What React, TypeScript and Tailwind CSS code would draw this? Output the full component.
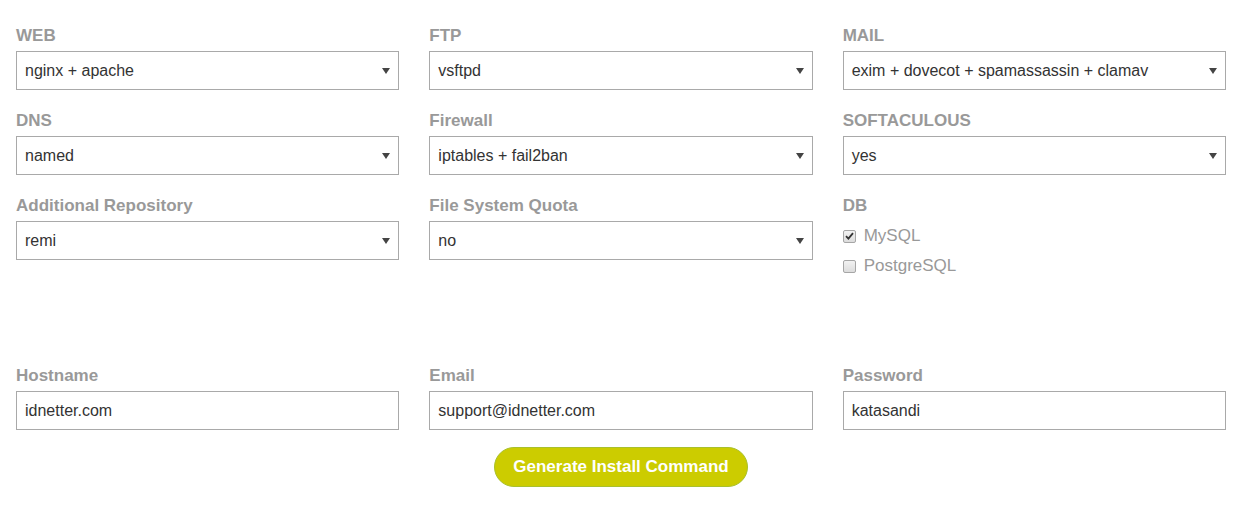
import React from "react";

type SelectField = {
  label: string;
  value: string;
};

const selectRows: SelectField[][] = [
  [
    { label: "WEB", value: "nginx + apache" },
    { label: "FTP", value: "vsftpd" },
    { label: "MAIL", value: "exim + dovecot + spamassassin + clamav" },
  ],
  [
    { label: "DNS", value: "named" },
    { label: "Firewall", value: "iptables + fail2ban" },
    { label: "SOFTACULOUS", value: "yes" },
  ],
];

const textFields = [
  { label: "Hostname", value: "idnetter.com" },
  { label: "Email", value: "support@idnetter.com" },
  { label: "Password", value: "katasandi" },
];

function Label({ children }: { children: React.ReactNode }) {
  return (
    <div className="mb-[5px] h-5 text-[17px] font-bold leading-5 text-[#999]">
      {children}
    </div>
  );
}

function Select({ label, value }: SelectField) {
  return (
    <div>
      <Label>{label}</Label>
      <div className="flex h-[39px] items-center justify-between border border-[#a9a9a9] bg-white pl-2 pr-[8px] text-[16px] text-[#333]">
        <span>{value}</span>
        <svg width="8" height="6" viewBox="0 0 8 6">
          <path d="M0 0 H8 L4 6 Z" fill="#444" />
        </svg>
      </div>
    </div>
  );
}

function TextInput({ label, value }: { label: string; value: string }) {
  return (
    <div>
      <Label>{label}</Label>
      <div className="flex h-[39px] items-center border border-[#a9a9a9] bg-white px-2 text-[16px] text-[#333]">
        {value}
      </div>
    </div>
  );
}

function Checkbox({ checked, label }: { checked?: boolean; label: string }) {
  return (
    <div className="flex h-[30px] items-center">
      <span className="flex h-[13px] w-[13px] items-center justify-center rounded-[2px] border border-[#a6a6a6] bg-gradient-to-b from-[#f2f2f2] to-[#dcdcdc]">
        {checked && (
          <svg width="9" height="8" viewBox="0 0 9 8">
            <path d="M1 4.2 L3.4 6.6 L8 1.2" fill="none" stroke="#333" strokeWidth="1.8" />
          </svg>
        )}
      </span>
      <span className="ml-2 text-[17px] text-[#999]">{label}</span>
    </div>
  );
}

export default function App() {
  return (
    <div
      className="h-[505px] w-[1241px] bg-white pl-4 pr-[15px] pt-[26px]"
      style={{ fontFamily: '"Liberation Sans", Arial, sans-serif' }}
    >
      <div className="grid grid-cols-3 gap-x-[30px] gap-y-[21px]">
        {selectRows.flat().map((f) => (
          <Select key={f.label} {...f} />
        ))}
        <Select label="Additional Repository" value="remi" />
        <Select label="File System Quota" value="no" />
        <div>
          <Label>DB</Label>
          <div>
            <Checkbox checked label="MySQL" />
            <Checkbox label="PostgreSQL" />
          </div>
        </div>
      </div>

      <div className="mt-[85px] grid grid-cols-3 gap-x-[30px]">
        {textFields.map((f) => (
          <TextInput key={f.label} {...f} />
        ))}
      </div>

      <div className="mt-[17px] flex justify-center">
        <button className="h-[40px] rounded-full border border-[#a9c02c] bg-[#cccc00] px-[18px] text-[17px] font-bold text-white">
          Generate Install Command
        </button>
      </div>
    </div>
  );
}
